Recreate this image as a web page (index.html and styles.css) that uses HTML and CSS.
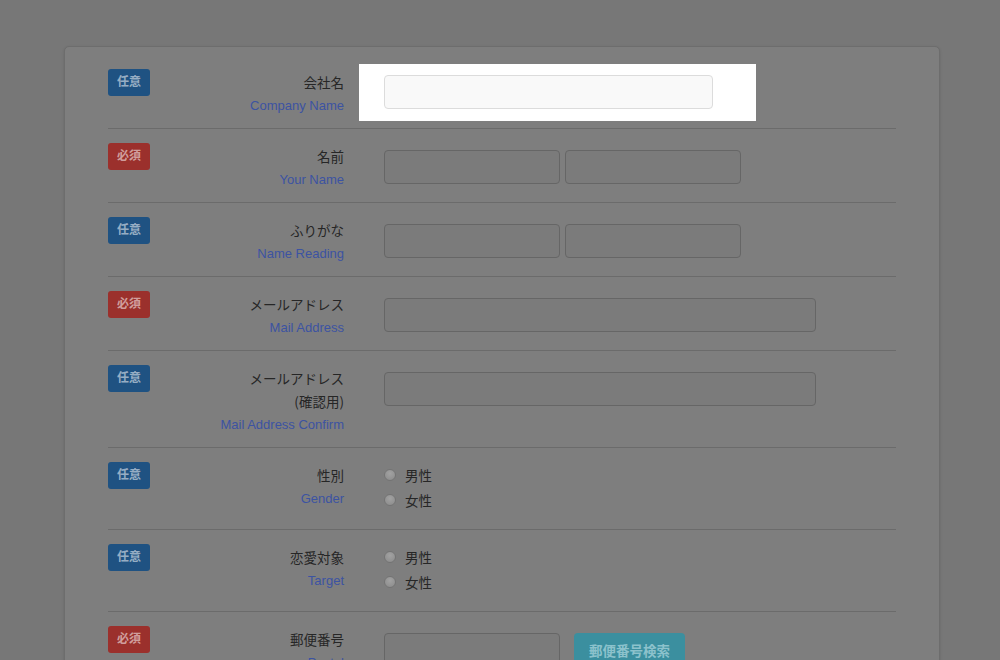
FILE: index.html
```html
<!doctype html>
<html lang="ja">
<head>
	<meta charset="UTF-8">
	<meta name="viewport" content="width=device-width, initial-scale=1.0">
	<title>お問い合わせフォーム</title>
	<link rel="stylesheet" href="styles.css">
</head>
<body class="tour-on">
	<div class="form_box">
		<div class="row">
			<span class="badge any">任意</span>
			<label class="label">会社名<span class="en">Company Name</span></label>
			<div class="field">
				<div class="spot">
					<input type="text" class="input w_company">
				</div>
			</div>
		</div>
		<div class="row">
			<span class="badge must">必須</span>
			<label class="label">名前<span class="en">Your Name</span></label>
			<div class="field">
				<input type="text" class="input w_half">
				<input type="text" class="input w_half">
			</div>
		</div>
		<div class="row">
			<span class="badge any">任意</span>
			<label class="label">ふりがな<span class="en">Name Reading</span></label>
			<div class="field">
				<input type="text" class="input w_half">
				<input type="text" class="input w_half">
			</div>
		</div>
		<div class="row">
			<span class="badge must">必須</span>
			<label class="label">メールアドレス<span class="en">Mail Address</span></label>
			<div class="field">
				<input type="text" class="input w_mail">
			</div>
		</div>
		<div class="row">
			<span class="badge any">任意</span>
			<label class="label">メールアドレス<br>(確認用)<span class="en">Mail Address Confirm</span></label>
			<div class="field">
				<input type="text" class="input w_mail">
			</div>
		</div>
		<div class="row">
			<span class="badge any">任意</span>
			<label class="label">性別<span class="en">Gender</span></label>
			<div class="field radios">
				<label class="radio"><input type="radio" name="gender">男性</label>
				<label class="radio"><input type="radio" name="gender">女性</label>
			</div>
		</div>
		<div class="row">
			<span class="badge any">任意</span>
			<label class="label">恋愛対象<span class="en">Target</span></label>
			<div class="field radios">
				<label class="radio"><input type="radio" name="target">男性</label>
				<label class="radio"><input type="radio" name="target">女性</label>
			</div>
		</div>
		<div class="row">
			<span class="badge must">必須</span>
			<label class="label">郵便番号<span class="en">Postal</span></label>
			<div class="field">
				<input type="text" class="input w_half">
				<button class="btn_zip">郵便番号検索</button>
			</div>
		</div>
		<div class="row">
			<span class="badge must">必須</span>
			<label class="label">住所<span class="en">Address</span></label>
			<div class="field">
				<input type="text" class="input w_mail">
			</div>
		</div>
	</div>
</body>
</html>
```

FILE: styles.css
```css
*,*::before,*::after{box-sizing:border-box;}
html,body{margin:0;padding:0;}
body{
	font-family:"Liberation Sans","Noto Sans CJK JP",sans-serif;
	font-size:14px;
	color:#262626;
	background:#777;
}
/* ページ全体はツアー表示中のため暗く表示 */
.form_box{
	width:876px;
	margin:46px 60px 40px 64px;
	padding:8px 43px 0;
	background:#7e7e7e;
	border:1px solid #6d6d6d;
	border-radius:5px;
	box-shadow:0 1px 3px rgba(0,0,0,.12);
}
.row{
	display:flex;
	align-items:flex-start;
	padding:14px 0 11px;
	border-bottom:1px solid #6b6b6b;
}
.badge{
	flex:none;
	width:42px;
	height:27px;
	line-height:27px;
	text-align:center;
	font-size:12px;
	font-weight:bold;
	color:rgba(255,255,255,.55);
	border-radius:3px;
}
.badge.any{background:#1f5282;}
.badge.must{background:#9b302c;}
.label{
	flex:none;
	width:194px;
	margin:2px 40px 0 0;
	text-align:right;
	line-height:23px;
	font-family:"Noto Sans CJK JP",sans-serif;
	font-size:13.5px;
}
.label .en{
	display:block;
	font-family:"Liberation Sans",sans-serif;
	font-size:13px;
	color:#3c53a2;
}
.field{
	display:flex;
	gap:5px;
	padding-top:7px;
}
.input{
	height:34px;
	padding:6px 12px;
	background:#7b7b7b;
	border:1px solid #666;
	border-radius:4px;
	font-size:14px;
}
.w_company{width:329px;}
.w_half{width:176px;}
.w_mail{width:432px;}
.spot{
	position:relative;
	z-index:10;
	margin:-12px 0 -12px -25px;
	padding:11px 43px 12px 25px;
	background:#fff;
}
.spot .input{
	background:#f9f9f9;
	border-color:#dcdcdc;
}
.radios{
	flex-direction:column;
	gap:0;
	padding:0 0 6px;
}
.radio{
	display:flex;
	align-items:center;
	height:25px;
	font-family:"Noto Sans CJK JP",sans-serif;
	font-size:13.5px;
}
.radio input{
	-webkit-appearance:none;
	appearance:none;
	width:12px;
	height:12px;
	margin:0 9px 0 0;
	border-radius:50%;
	border:1px solid #747474;
	background:radial-gradient(circle at 50% 35%,#a2a2a2,#8a8a8a);
}
.btn_zip{
	height:34px;
	margin-left:9px;
	padding:0 15px;
	background:#3b8f9f;
	color:#8cc2cc;
	border:0;
	border-radius:4px;
	font-family:"Noto Sans CJK JP",sans-serif;
	font-size:13.5px;
	font-weight:bold;
}
```
